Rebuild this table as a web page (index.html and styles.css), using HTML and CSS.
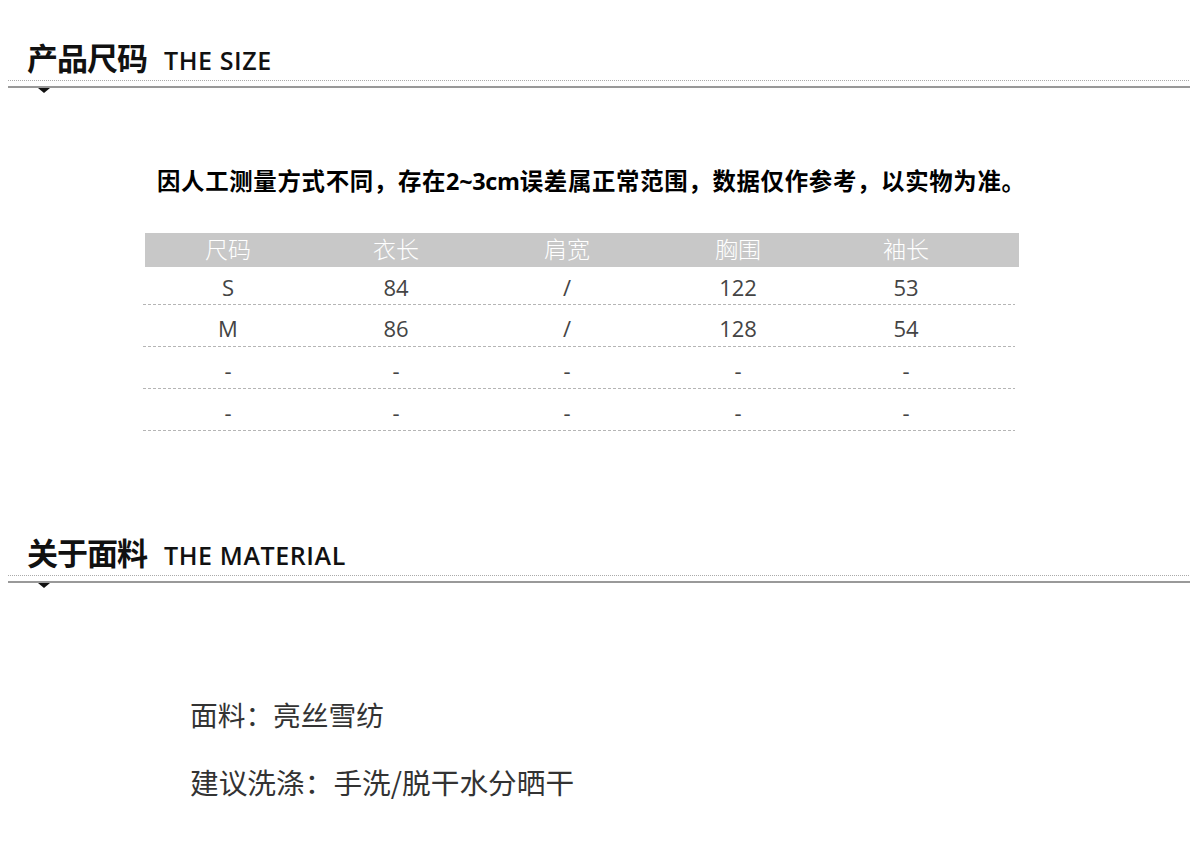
FILE: index.html
```html
<!DOCTYPE html>
<html lang="zh-CN">
<head>
<meta charset="utf-8">
<title>产品尺码</title>
<link rel="stylesheet" href="styles.css">
</head>
<body>
<section class="sec sec-size">
  <div class="sec-head">
    <h2 class="sec-title"><span class="cn">产品尺码</span><span class="en">THE SIZE</span></h2>
    <div class="dots"></div>
    <div class="rule"></div>
  </div>
  <div class="size-body">
    <p class="notice">因人工测量方式不同，存在<span class="num">2~3cm</span>误差属正常范围，数据仅作参考，以实物为准。</p>
    <div class="table">
      <div class="tr th"><span>尺码</span><span>衣长</span><span>肩宽</span><span>胸围</span><span>袖长</span><span></span></div>
      <div class="tr td r1"><span>S</span><span>84</span><span>/</span><span>122</span><span>53</span><span></span></div>
      <div class="tr td"><span>M</span><span>86</span><span>/</span><span>128</span><span>54</span><span></span></div>
      <div class="tr td"><span>-</span><span>-</span><span>-</span><span>-</span><span>-</span><span></span></div>
      <div class="tr td"><span>-</span><span>-</span><span>-</span><span>-</span><span>-</span><span></span></div>
    </div>
  </div>
</section>
<section class="sec sec-material">
  <div class="sec-head">
    <h2 class="sec-title"><span class="cn">关于面料</span><span class="en">THE MATERIAL</span></h2>
    <div class="dots"></div>
    <div class="rule"></div>
  </div>
  <div class="material-body">
    <p class="mat-line mat-fabric">面料：亮丝雪纺</p>
    <p class="mat-line mat-wash">建议洗涤：手洗/脱干水分晒干</p>
  </div>
</section>
</body>
</html>
```

FILE: styles.css
```css
html, body {
  margin: 0;
  padding: 0;
  background: #fff;
}
body {
  width: 1190px;
  height: 860px;
  overflow: hidden;
  font-family: "Noto Sans CJK SC", "Open Sans", sans-serif;
  color: #333;
}
.sec-head {
  margin-left: 8px;
}
.sec-title {
  margin: 0;
  padding-left: 19px;
  height: 36px;
  display: flex;
  align-items: baseline;
  font-weight: 400;
  color: #111;
}
.sec-title .cn {
  font-family: "Noto Sans CJK SC", sans-serif;
  font-size: 31px;
  line-height: 36px;
  font-weight: 700;
  letter-spacing: -1px;
}
.sec-title .en {
  font-family: "Open Sans", sans-serif;
  font-size: 25px;
  line-height: 36px;
  font-weight: 600;
  margin-left: 17px;
  letter-spacing: 0.6px;
}
.dots {
  margin-top: 5px;
  height: 1px;
  background-image: repeating-linear-gradient(to right, #aaa 0 1px, transparent 1px 2px);
}
.rule {
  position: relative;
  margin-top: 5px;
  height: 2px;
  background: #999;
}
.rule::after {
  content: "";
  position: absolute;
  left: 30px;
  top: 2px;
  border-left: 6px solid transparent;
  border-right: 6px solid transparent;
  border-top: 5px solid #111;
}
.sec-size {
  padding-top: 39px;
}
.size-body {
  margin-left: 145px;
  width: 874px;
}
.notice {
  margin: 77px 0 0 12px;
  font-family: "Noto Sans CJK SC", sans-serif;
  font-weight: 700;
  font-size: 23.4px;
  line-height: 30px;
  color: #000;
  white-space: nowrap;
  letter-spacing: 0.7px;
}
.notice .num {
  font-family: "Open Sans", sans-serif;
  font-weight: 700;
  letter-spacing: -0.3px;
}
.table {
  margin-top: 37px;
}
.tr {
  display: grid;
  grid-template-columns: 166px 170px 172px 170px 166px 1fr;
  align-items: center;
  text-align: center;
}
.th {
  height: 34px;
  background: #c8c8c8;
  color: #fff;
  font-family: "Noto Sans CJK SC", sans-serif;
  font-size: 23px;
  font-weight: 300;
  line-height: 30px;
  padding-bottom: 4px;
  box-sizing: border-box;
}
.td {
  height: 41px;
  width: 872px;
  margin-left: -2px;
  padding-left: 2px;
  box-sizing: border-box;
  padding-top: 3px;
  font-family: "Open Sans", "Noto Sans CJK SC", sans-serif;
  font-size: 22px;
  color: #444;
  background-image: repeating-linear-gradient(to right, #b5b5b5 0 3px, transparent 3px 5px);
  background-size: 100% 1px;
  background-position: 0 100%;
  background-repeat: no-repeat;
}
.td.r1 {
  height: 38px;
  padding-top: 2px;
}
.td + .td:not(.r1) {
  height: 42px;
}
.sec-material {
  padding-top: 103px;
}
.material-body {
  padding-left: 190px;
  padding-top: 111px;
}
.mat-line {
  margin: 0;
  font-family: "Noto Sans CJK SC", sans-serif;
  line-height: 40px;
  color: #333;
}
.mat-fabric {
  font-size: 27.7px;
}
.mat-wash {
  margin-top: 28px;
  font-size: 28.7px;
}
```
